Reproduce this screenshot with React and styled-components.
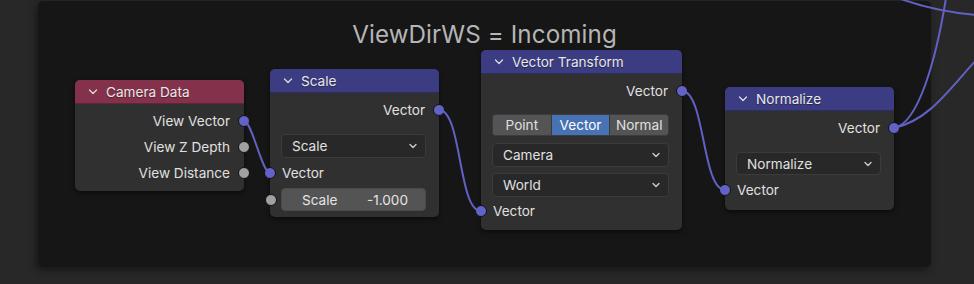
import React from 'react'
import styled, { createGlobalStyle } from 'styled-components'

const GlobalStyle = createGlobalStyle`
  html, body {
    margin: 0;
    padding: 0;
    background: #282828;
  }
  body {
    font-family: Inter, "Noto Sans", "DejaVu Sans", sans-serif;
    -webkit-font-smoothing: antialiased;
  }
`

const Canvas = styled.div`
  position: relative;
  width: 974px;
  height: 284px;
  overflow: hidden;
  background: #282828;
`

// the frame node is itself a node on the canvas
const Frame = styled.div`
  position: absolute;
  left: 38px;
  top: 1px;
  width: 893px;
  height: 266px;
  background: #161616;
  border-radius: 5px;
  box-shadow: -2px 3px 8px rgba(0, 0, 0, 0.45);
  display: flex;
  justify-content: center;
`

const FrameTitle = styled.div`
  margin-top: 19px;
  font-size: 24.2px;
  color: #b5b5b5;
  letter-spacing: 0.1px;
  height: 30px;
`

const Links = styled.svg`
  position: absolute;
  left: 0;
  top: 0;
  pointer-events: none;
  z-index: 2;
`

const Node = styled.div`
  position: absolute;
  left: ${p => p.x}px;
  top: ${p => p.y}px;
  width: ${p => p.w}px;
  background: #303030;
  border-radius: 5px;
  box-shadow: 0 2px 5px rgba(0, 0, 0, 0.55);
  display: flex;
  flex-direction: column;
  z-index: 1;
`

const Header = styled.div`
  height: 24px;
  display: flex;
  align-items: center;
  gap: 8px;
  padding-left: 13px;
  background: ${p => p.color};
  border-radius: 5px 5px 0 0;
  border-bottom: 1px solid rgba(0, 0, 0, 0.25);
  box-sizing: border-box;
  color: #e8e8e8;
  font-size: 13.6px;
  text-shadow: 0 1px 1px rgba(0, 0, 0, 0.4);
`

const Chevron = styled.svg`
  width: 10px;
  height: 10px;
  flex: none;
`

const Body = styled.div`
  display: flex;
  flex-direction: column;
  padding: ${p => p.pad || '6px 0 8px'};
`

const Row = styled.div`
  position: relative;
  height: 22px;
  display: flex;
  align-items: center;
  justify-content: ${p => (p.out ? 'flex-end' : 'flex-start')};
  padding: 0 14px 0 12px;
  margin-top: ${p => p.mt || 0}px;
  color: #e0e0e0;
  font-size: 13.6px;
`

const Socket = styled.span`
  position: absolute;
  top: 50%;
  ${p => (p.out ? 'right: -6px;' : 'left: -6px;')}
  width: 10px;
  height: 10px;
  margin-top: -6px;
  border-radius: 50%;
  background: ${p => (p.kind === 'vector' ? '#6363c7' : '#a1a1a1')};
  border: 1px solid #111;
`

const Widget = styled.div`
  position: relative;
  margin: ${p => p.mt || 0}px 13px 0 11px;
  height: ${p => p.h || 24}px;
  box-sizing: border-box;
  display: flex;
  align-items: center;
  font-size: 13.6px;
  color: #e0e0e0;
`

const Dropdown = styled(Widget)`
  background: #282828;
  border: 1px solid #3b3b3b;
  border-radius: 4px;
  padding: 0 8px 0 10px;
  justify-content: space-between;
`

const Small = styled.svg`
  width: 8px;
  height: 8px;
`

const NumField = styled(Widget)`
  background: #545454;
  border: 1px solid #4a4a4a;
  border-radius: 4px;
  padding: 0 17px 0 20px;
  justify-content: space-between;
  color: #e4e4e4;
`

const Segmented = styled(Widget)`
  border-radius: 4px;
  overflow: hidden;
  background: #545454;
  border: 1px solid #3c3c3c;
`

const Segment = styled.div`
  flex: ${p => p.grow || 1};
  height: 100%;
  display: flex;
  align-items: center;
  justify-content: center;
  background: ${p => (p.active ? '#4772b3' : '#545454')};
  color: ${p => (p.active ? '#ffffff' : '#e0e0e0')};
  border-left: ${p => (p.first ? 'none' : '1px solid #3a3a3a')};
`

const Down = () => (
  <Chevron viewBox="0 0 10 10">
    <path d="M1.5 3 L5 6.5 L8.5 3" fill="none" stroke="#e0e0e0" strokeWidth="1.2" strokeLinecap="round" strokeLinejoin="round" />
  </Chevron>
)

const Caret = () => (
  <Small viewBox="0 0 8 8">
    <path d="M1 2.5 L4 5.5 L7 2.5" fill="none" stroke="#d0d0d0" strokeWidth="1.3" strokeLinecap="round" strokeLinejoin="round" />
  </Small>
)

function Select({ label, mt, h }) {
  return (
    <Dropdown mt={mt} h={h}>
      <span>{label}</span>
      <Caret />
    </Dropdown>
  )
}

function Output({ label, kind = 'vector', mt }) {
  return (
    <Row out mt={mt}>
      {label}
      <Socket out kind={kind} />
    </Row>
  )
}

function Input({ label, kind = 'vector', mt }) {
  return (
    <Row mt={mt}>
      <Socket kind={kind} />
      {label}
    </Row>
  )
}

const RED = '#84314b'
const BLUE = '#3c3c82'

const links = [
  'M244 121 C252 121 262 173 270 173',
  'M439 110 C462 110 458 211 481 211',
  'M682 91 C705 91 702 190 725 190',
  'M894 128 C918 124 936 60 946 -2',
  'M894 128 C930 120 950 88 978 58',
  'M898 -2 C920 6 950 13 978 15',
]

export default function App() {
  return (
    <>
      <GlobalStyle />
      <Canvas>
        <Frame>
          <FrameTitle>ViewDirWS = Incoming</FrameTitle>
        </Frame>

        <Node x={75} y={80} w={169}>
          <Header color={RED}><Down />Camera Data</Header>
          <Body pad="6px 0 7px">
            <Output label="View Vector" />
            <Output label="View Z Depth" kind="float" mt={4} />
            <Output label="View Distance" kind="float" mt={4} />
          </Body>
        </Node>

        <Node x={270} y={69} w={169}>
          <Header color={BLUE}><Down />Scale</Header>
          <Body pad="6px 0 6px">
            <Output label="Vector" />
            <Select label="Scale" mt={13} />
            <Input label="Vector" mt={4} />
            <NumField mt={4} h={23}>
              <Socket kind="float" style={{ left: -17 }} />
              <span>Scale</span>
              <span>-1.000</span>
            </NumField>
          </Body>
        </Node>

        <Node x={481} y={50} w={201}>
          <Header color={BLUE}><Down />Vector Transform</Header>
          <Body pad="6px 0 8px">
            <Output label="Vector" />
            <Segmented mt={12} h={22}>
              <Segment first>Point</Segment>
              <Segment active>Vector</Segment>
              <Segment>Normal</Segment>
            </Segmented>
            <Select label="Camera" mt={7} />
            <Select label="World" mt={6} />
            <Input label="Vector" mt={3} />
          </Body>
        </Node>

        <Node x={725} y={87} w={169}>
          <Header color={BLUE}><Down />Normalize</Header>
          <Body pad="6px 0 9px">
            <Output label="Vector" />
            <Select label="Normalize" mt={13} h={23} />
            <Input label="Vector" mt={4} />
          </Body>
        </Node>

        <Links width="974" height="284" viewBox="0 0 974 284">
          {links.map((d, i) => (
            <path key={i} d={d} fill="none" stroke="#6161c4" strokeWidth="2" />
          ))}
        </Links>
      </Canvas>
    </>
  )
}
